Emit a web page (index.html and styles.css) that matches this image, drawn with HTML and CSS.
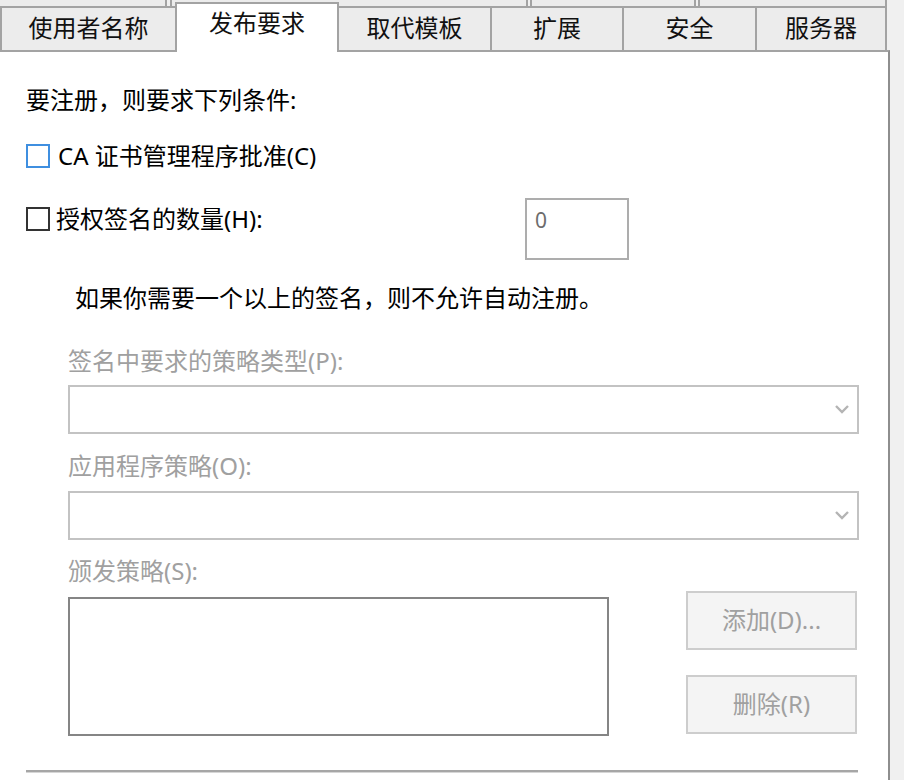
FILE: index.html
```html
<!DOCTYPE html>
<html lang="zh-CN">
<head>
<meta charset="utf-8">
<title>发布要求</title>
<link rel="stylesheet" href="styles.css">
</head>
<body>
<div class="dialog">
  <div class="tabstrip">
    <div class="tabrow back">
      <div class="btab w1"></div>
      <div class="btab w2"></div>
      <div class="btab w3"></div>
      <div class="btab w4"></div>
    </div>
    <div class="tabrow front">
      <div class="tab t1">使用者名称</div>
      <div class="tab t2 active">发布要求</div>
      <div class="tab t3">取代模板</div>
      <div class="tab t4">扩展</div>
      <div class="tab t5">安全</div>
      <div class="tab t6">服务器</div>
    </div>
  </div>
  <div class="panel">
    <div class="text">要注册，则要求下列条件:</div>
    <div class="check-row row1">
      <span class="box focus"></span>
      <span class="text">CA 证书管理程序批准(C)</span>
    </div>
    <div class="row2">
      <div class="check-row left">
        <span class="box"></span>
        <span class="text">授权签名的数量(H):</span>
      </div>
      <div class="numbox">0</div>
    </div>
    <div class="text info">如果你需要一个以上的签名，则不允许自动注册。</div>
    <div class="indent">
      <div class="text dis lab-p">签名中要求的策略类型(P):</div>
      <div class="select s1">
        <svg class="chev" width="14" height="9" viewBox="0 0 14 9"><path d="M1 1 L7 7 L13 1" fill="none" stroke="#b4b4b4" stroke-width="2.4"/></svg>
      </div>
      <div class="text dis lab-o">应用程序策略(O):</div>
      <div class="select s2">
        <svg class="chev" width="14" height="9" viewBox="0 0 14 9"><path d="M1 1 L7 7 L13 1" fill="none" stroke="#b4b4b4" stroke-width="2.4"/></svg>
      </div>
      <div class="text dis lab-s">颁发策略(S):</div>
      <div class="bottom">
        <div class="listbox"></div>
        <div class="btns">
          <div class="btn">添加(D)...</div>
          <div class="btn">删除(R)</div>
        </div>
      </div>
    </div>
    <div class="sep"></div>
  </div>
</div>
</body>
</html>
```

FILE: styles.css
```css
html, body {
  margin: 0;
  padding: 0;
  background: #f0f0f0;
}
body {
  width: 904px;
  height: 780px;
  overflow: hidden;
  font-family: "Noto Sans", "Noto Sans CJK SC", sans-serif;
  font-size: 24px;
  color: #000;
}
.dialog {
  width: 890px;
}
.tabstrip {
  height: 50px;
  display: flex;
  flex-direction: column;
}
.tabrow {
  display: flex;
}
.tabrow.back {
  height: 6px;
}
.btab {
  box-sizing: border-box;
  height: 6px;
  background: #ececec;
  border-left: 2px solid #a3a3a3;
  border-right: 2px solid #a3a3a3;
}
.btab.w1 { width: 167px; border-left: none; }
.btab.w2 { width: 358px; margin-left: 3px; }
.btab.w3 { width: 166px; margin-left: 2px; }
.btab.w4 { width: 189px; margin-left: 2px; }
.tabrow.front {
  height: 44px;
  align-items: stretch;
}
.tab {
  box-sizing: border-box;
  height: 44px;
  background: #ececec;
  border-top: 2px solid #a3a3a3;
  border-right: 2px solid #a3a3a3;
  display: flex;
  align-items: center;
  justify-content: center;
  line-height: 1;
  padding-bottom: 2px;
  color: #111;
}
.tab.t1 { width: 177px; border-left: 2px solid #a3a3a3; }
.tab.t2 { width: 162px; }
.tab.t3 { width: 153px; }
.tab.t4 { width: 132px; }
.tab.t5 { width: 133px; }
.tab.t6 { width: 130px; }
.tab.active {
  position: relative;
  z-index: 2;
  background: #fff;
  height: 50px;
  margin-top: -4px;
  border-left: 2px solid #a3a3a3;
  margin-left: -2px;
  width: 164px;
  padding-bottom: 10px;
}
.panel {
  box-sizing: border-box;
  height: 730px;
  background: #fff;
  border-top: 2px solid #a3a3a3;
  border-right: 2px solid #8e8e8e;
  padding: 32px 0 0 26px;
  display: flex;
  flex-direction: column;
}
.text {
  line-height: 32px;
  height: 32px;
  white-space: nowrap;
}
.check-row {
  display: flex;
  align-items: center;
  height: 32px;
}
.row1 {
  margin-top: 24px;
}
.box {
  box-sizing: border-box;
  width: 24px;
  height: 24px;
  border: 2px solid #333;
  background: #fff;
  margin-right: 8px;
  flex: none;
}
.box.focus {
  border-color: #3f8fe0;
}
.row2 {
  margin-top: 26px;
  display: flex;
  align-items: flex-start;
}
.row2 .left {
  width: 499px;
  margin-top: 5px;
}
.row2 .left .box {
  margin-right: 6px;
}
.numbox {
  box-sizing: border-box;
  width: 104px;
  height: 62px;
  border: 2px solid #adadad;
  color: #6d6d6d;
  padding: 4px 0 0 8px;
  line-height: 32px;
  font-family: "Noto Sans", sans-serif;
  font-size: 21px;
}
.info {
  margin-top: 22px;
  padding-left: 49px;
}
.indent {
  padding-left: 42px;
  display: flex;
  flex-direction: column;
}
.dis {
  color: #a0a0a0;
}
.lab-p { margin-top: 31px; }
.select {
  box-sizing: border-box;
  width: 791px;
  height: 49px;
  border: 2px solid #c3c3c3;
  background: #fff;
  display: flex;
  align-items: center;
  justify-content: flex-end;
  padding-right: 8px;
}
.s1 { margin-top: 8px; }
.lab-o { margin-top: 16px; }
.s2 { margin-top: 9px; }
.lab-s { margin-top: 15px; }
.bottom {
  margin-top: 4px;
  display: flex;
  align-items: flex-start;
}
.listbox {
  box-sizing: border-box;
  width: 541px;
  height: 139px;
  margin-top: 6px;
  border: 2px solid #858585;
  background: #fff;
}
.btns {
  margin-left: 77px;
  display: flex;
  flex-direction: column;
  gap: 25px;
}
.btn {
  box-sizing: border-box;
  width: 171px;
  height: 59px;
  border: 2px solid #cdcdcd;
  background: #f4f4f4;
  color: #a0a0a0;
  display: flex;
  align-items: center;
  justify-content: center;
  line-height: 1;
  padding-bottom: 2px;
}
.sep {
  margin-top: 34px;
  width: 832px;
  height: 0;
  border-top: 2px solid #a6a6a6;
  border-bottom: 1px solid #d6d6d6;
}
```
